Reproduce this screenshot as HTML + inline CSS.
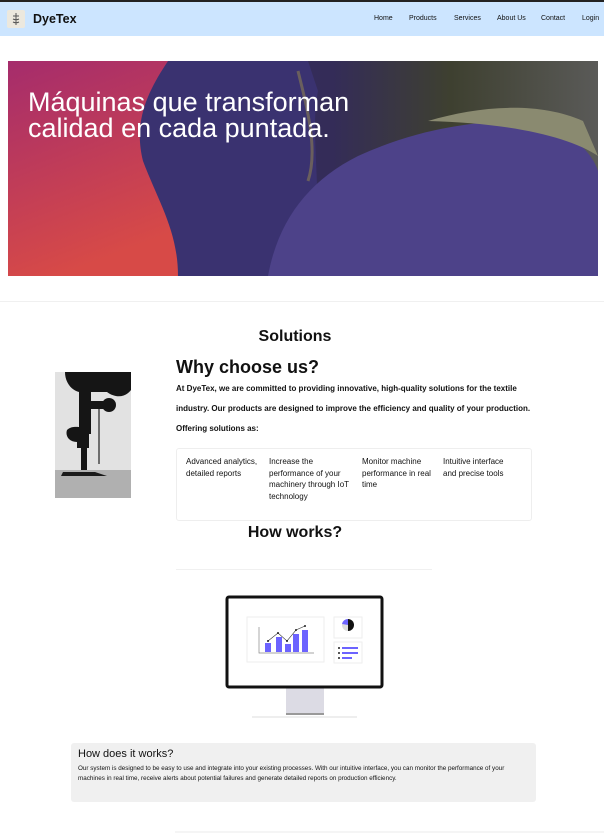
<!DOCTYPE html>
<html><head><meta charset="utf-8"><style>
*{margin:0;padding:0;box-sizing:border-box}
body{width:604px;height:833px;position:relative;background:#fff;font-family:"Liberation Sans",Arial,sans-serif;color:#111;overflow:hidden}
.a{position:absolute}
nav{position:absolute;left:0;top:0;width:604px;height:36px;background:#cce5ff;border-top:2px solid #222}
nav .l{position:absolute;top:13px;font-size:7px;color:#111}
.p{font-size:8px;font-weight:bold;line-height:20px}
.c{font-size:8px;line-height:11.5px;position:absolute;top:456px}
</style></head><body>
<nav>
<div class="a" style="left:7px;top:8px;width:18px;height:18px;background:#ece8de;border-radius:2px"></div>
<svg class="a" style="left:10px;top:10px" width="12" height="14" viewBox="0 0 12 14"><path d="M6 1v12M3 4h6M3 7c2 1 4 1 6 0M3 10c2 1 4 1 6 0" stroke="#555" stroke-width="1" fill="none"/></svg>
<div class="a" style="left:33px;top:10px;font-size:12.5px;font-weight:bold">DyeTex</div>
<span class="l" style="left:374px">Home</span>
<span class="l" style="left:409px">Products</span>
<span class="l" style="left:454px">Services</span>
<span class="l" style="left:497px">About Us</span>
<span class="l" style="left:541px">Contact</span>
<span class="l" style="left:582px">Login</span>
</nav>
<svg class="a" style="left:8px;top:61px" width="590" height="215" viewBox="0 0 590 215">
<defs>
<linearGradient id="g" x1="0" y1="0" x2="0.3" y2="1"><stop offset="0" stop-color="#a52c6c"/><stop offset="1" stop-color="#d74a47"/></linearGradient>
<linearGradient id="bg" x1="0" y1="0" x2="1" y2="0"><stop offset="0" stop-color="#3a3068"/><stop offset="0.55" stop-color="#342c58"/><stop offset="0.75" stop-color="#3e4030"/><stop offset="1" stop-color="#5a5a58"/></linearGradient>
</defs>
<rect width="590" height="215" fill="url(#bg)"/>
<path d="M130 0C125 40 130 90 140 130C150 170 165 200 170 215H300C320 150 300 80 310 30L300 0Z" fill="#3a3270"/>
<path d="M260 215C270 160 300 120 350 95C400 72 450 62 500 60C545 62 580 80 590 110V215Z" fill="#4d4289"/>
<path d="M420 60C470 45 530 40 575 60L590 95C560 75 500 62 420 60Z" fill="#8a8a70"/>
<path d="M290 10C300 50 310 90 300 120" stroke="#8a7d50" stroke-width="3" fill="none" opacity="0.6"/>
<path d="M0 0H160C140 30 125 60 135 100C150 140 170 170 170 215H0Z" fill="url(#g)"/>
</svg>
<div class="a" style="left:28px;top:89px;color:#fff;font-size:27px;line-height:26px">Máquinas que transforman<br>calidad en cada puntada.</div>
<div class="a" style="left:0;top:301px;width:604px;height:1px;background:#f0f0f0"></div>
<div class="a" style="left:0;top:328px;width:590px;text-align:center;font-size:16px;font-weight:bold">Solutions</div>
<svg class="a" style="left:55px;top:372px" width="76" height="126" viewBox="0 0 76 126">
<rect width="76" height="126" fill="#e2e2e2"/><rect y="98" width="76" height="28" fill="#b0b0b0"/>
<path d="M10 0H76V18C70 26 60 26 52 20H36V62H34V76H22V70C14 70 10 64 12 58C16 54 22 55 24 55V20C16 18 10 10 10 0Z" fill="#151515"/>
<circle cx="54" cy="33" r="7" fill="#151515"/><rect x="32" y="29" width="22" height="8" fill="#151515"/>
<path d="M44 37V92" stroke="#222" stroke-width="1.2"/>
<path d="M26 76H32V98H26Z" fill="#151515"/>
<path d="M8 100H40L52 104H6Z" fill="#1a1a1a"/>
</svg>
<div class="a" style="left:176px;top:357px;font-size:18px;font-weight:bold">Why choose us?</div>
<div class="a p" style="left:176px;top:379px;width:360px">At DyeTex, we are committed to providing innovative, high-quality solutions for the textile industry. Our products are designed to improve the efficiency and quality of your production.<br>Offering solutions as:</div>
<div class="a" style="left:176px;top:448px;width:356px;height:73px;border:1px solid #eee;border-radius:3px"></div>
<div class="c" style="left:186px;width:82px">Advanced analytics, detailed reports</div>
<div class="c" style="left:269px;width:90px">Increase the performance of your machinery through IoT technology</div>
<div class="c" style="left:362px;width:80px">Monitor machine performance in real time</div>
<div class="c" style="left:443px;width:72px">Intuitive interface and precise tools</div>
<div class="a" style="left:0;top:524px;width:590px;text-align:center;font-size:16px;font-weight:bold">How works?</div>
<div class="a" style="left:176px;top:569px;width:256px;height:1px;background:#f0f0f0"></div>
<svg class="a" style="left:200px;top:580px" width="200" height="150" viewBox="0 0 200 150">
<rect x="86" y="107" width="38" height="28" fill="#dcdbe4"/><rect x="86" y="133" width="38" height="2" fill="#999"/>
<rect x="52" y="136" width="105" height="2" fill="#eee"/>
<rect x="27" y="17" width="155" height="90" rx="2" fill="#fff" stroke="#111" stroke-width="3"/>
<rect x="47" y="37" width="77" height="45" fill="#fff" stroke="#eee"/>
<path d="M59 47V73H114" stroke="#888" stroke-width="0.7" fill="none"/>
<rect x="65" y="63" width="6" height="9" fill="#6c63ff"/><rect x="76" y="57" width="6" height="15" fill="#6c63ff"/><rect x="85" y="64" width="6" height="8" fill="#6c63ff"/><rect x="93" y="54" width="6" height="18" fill="#6c63ff"/><rect x="102" y="50" width="6" height="22" fill="#6c63ff"/>
<path d="M68 61L78 53L87 61L96 50L105 46" stroke="#333" stroke-width="0.6" fill="none"/>
<circle cx="68" cy="61" r="1" fill="#222"/><circle cx="78" cy="53" r="1" fill="#222"/><circle cx="87" cy="61" r="1" fill="#222"/><circle cx="96" cy="50" r="1" fill="#222"/><circle cx="105" cy="46" r="1" fill="#222"/>
<rect x="134" y="37" width="28" height="21" fill="#fff" stroke="#eee"/>
<circle cx="148" cy="45" r="6" fill="#ddd"/><path d="M148 39A6 6 0 0 1 148 51Z" fill="#111"/><path d="M148 45L148 39A6 6 0 0 0 142 44Z" fill="#6c63ff"/>
<rect x="134" y="62" width="28" height="21" fill="#fff" stroke="#eee"/>
<rect x="142" y="67" width="16" height="2" fill="#6c63ff"/><rect x="142" y="72" width="16" height="2" fill="#6c63ff"/><rect x="142" y="77" width="10" height="2" fill="#6c63ff"/>
<circle cx="139" cy="68" r="1" fill="#222"/><circle cx="139" cy="73" r="1" fill="#222"/><circle cx="139" cy="78" r="1" fill="#222"/>
</svg>
<div class="a" style="left:71px;top:743px;width:465px;height:59px;background:#f0f0f0;border-radius:3px;padding:5px 7px">
<div style="font-size:11px;margin-bottom:4px">How does it works?</div>
<div style="font-size:6.3px;line-height:10px">Our system is designed to be easy to use and integrate into your existing processes. With our intuitive interface, you can monitor the performance of your machines in real time, receive alerts about potential failures and generate detailed reports on production efficiency.</div>
</div>
<div class="a" style="left:175px;top:831px;width:429px;height:2px;background:#f5f5f5"></div>
</body></html>
